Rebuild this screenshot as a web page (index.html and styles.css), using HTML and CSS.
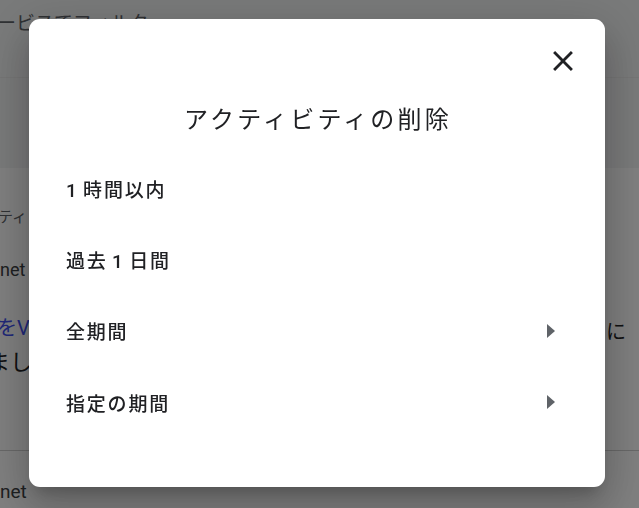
FILE: index.html
```html
<!DOCTYPE html>
<html lang="ja">
<head>
<meta charset="utf-8">
<title>アクティビティの削除</title>
<link rel="stylesheet" href="styles.css">
</head>
<body>
<div class="page">
  <header class="page-head">
    <div class="filter-row"><span class="filter-text">ービスでフィルタ</span></div>
    <div class="head-band"></div>
  </header>
  <main class="page-body">
    <div class="section-label">ティ</div>
    <div class="entry-title">net</div>
    <div class="entry-line">
      <span class="entry-link">をV</span>
      <span class="entry-tail">に</span>
    </div>
    <div class="entry-line2">まし</div>
    <div class="divider"></div>
    <div class="entry-title second">net</div>
  </main>
</div>

<div class="overlay">
  <div class="dialog" role="dialog" aria-labelledby="dlg-title">
    <div class="dialog-top">
      <button class="close-btn" aria-label="閉じる">
        <svg viewBox="0 0 24 24" width="34" height="34"><path d="M19 6.41L17.59 5 12 10.59 6.41 5 5 6.41 10.59 12 5 17.59 6.41 19 12 13.41 17.59 19 19 17.59 13.41 12z" fill="#202124"/></svg>
      </button>
    </div>
    <h1 class="dialog-title" id="dlg-title">アクティビティの削除</h1>
    <ul class="options">
      <li class="option"><span class="option-label">1 時間以内</span></li>
      <li class="option"><span class="option-label">過去 1 日間</span></li>
      <li class="option"><span class="option-label">全期間</span>
        <svg class="arrow" viewBox="0 0 8 14" width="8" height="14"><polygon points="0,0 8,7 0,14" fill="#5f6368"/></svg>
      </li>
      <li class="option"><span class="option-label">指定の期間</span>
        <svg class="arrow" viewBox="0 0 8 14" width="8" height="14"><polygon points="0,0 8,7 0,14" fill="#5f6368"/></svg>
      </li>
    </ul>
  </div>
</div>
</body>
</html>
```

FILE: styles.css
```css
html, body {
  margin: 0;
  padding: 0;
  width: 639px;
  height: 508px;
  overflow: hidden;
}

body {
  font-family: Roboto, "Noto Sans CJK JP", sans-serif;
  background: #ffffff;
  color: #202124;
}

/* ---------- background page ---------- */
.page {
  width: 639px;
  height: 508px;
  display: flex;
  flex-direction: column;
}

.page-head {
  background: #f3f4f5;
  height: 168px;
  display: flex;
  flex-direction: column;
}

.filter-row {
  height: 78px;
  border-bottom: 1px solid #ebebeb;
  padding-top: 11px;
  box-sizing: border-box;
}

.filter-text {
  display: block;
  font-size: 19px;
  line-height: 26px;
  color: #5f6368;
  margin-left: -3px;
}

.head-band {
  flex: 1;
}

.page-body {
  display: flex;
  flex-direction: column;
}

.section-label {
  margin-top: 38px;
  font-size: 15px;
  line-height: 22px;
  color: #5f6368;
  margin-left: -2px;
}

.entry-title {
  margin-top: 30px;
  font-size: 18px;
  line-height: 24px;
  color: #3c4043;
}

.entry-line {
  margin-top: 32px;
  display: flex;
  justify-content: space-between;
  font-size: 20px;
  line-height: 28px;
  padding-right: 13px;
}

.entry-link {
  color: #4050f0;
  margin-left: -3px;
}

.entry-tail {
  color: #202124;
  position: relative;
  top: 4px;
}

.entry-line2 {
  margin-top: 6px;
  font-size: 22px;
  line-height: 30px;
  color: #202124;
  margin-left: -12px;
}

.divider {
  margin-top: 72px;
  height: 1px;
  background: #d0d0d0;
}

.entry-title.second {
  margin-top: 29px;
  font-size: 19px;
}

/* ---------- overlay & dialog ---------- */
.overlay {
  position: fixed;
  inset: 0;
  background: rgba(0, 0, 0, 0.5);
  display: flex;
  align-items: flex-start;
  padding: 19px 0 0 29px;
  box-sizing: border-box;
}

.dialog {
  width: 576px;
  height: 468px;
  background: #ffffff;
  border-radius: 11px;
  box-shadow: 0 11px 15px -7px rgba(0,0,0,.2), 0 24px 38px 3px rgba(0,0,0,.14), 0 9px 46px 8px rgba(0,0,0,.12);
  display: flex;
  flex-direction: column;
  box-sizing: border-box;
}

.dialog-top {
  display: flex;
  justify-content: flex-end;
  padding: 25px 25px 0 0;
}

.close-btn {
  width: 34px;
  height: 34px;
  padding: 0;
  border: 0;
  background: none;
  display: flex;
}

.dialog-title {
  margin: 26px 0 0 0;
  font-size: 24px;
  line-height: 32px;
  font-weight: 400;
  letter-spacing: 3.2px;
  text-align: center;
  color: #202124;
  padding-left: 2px;
}

.options {
  list-style: none;
  margin: 16.5px 0 0 0;
  padding: 0;
}

.option {
  height: 71.3px;
  display: flex;
  align-items: center;
  justify-content: space-between;
  padding: 0 50px 0 37px;
}

.option-label {
  font-size: 19px;
  font-weight: 500;
  letter-spacing: 1.8px;
  word-spacing: -2px;
  color: #202124;
}

.arrow {
  display: block;
}
```
